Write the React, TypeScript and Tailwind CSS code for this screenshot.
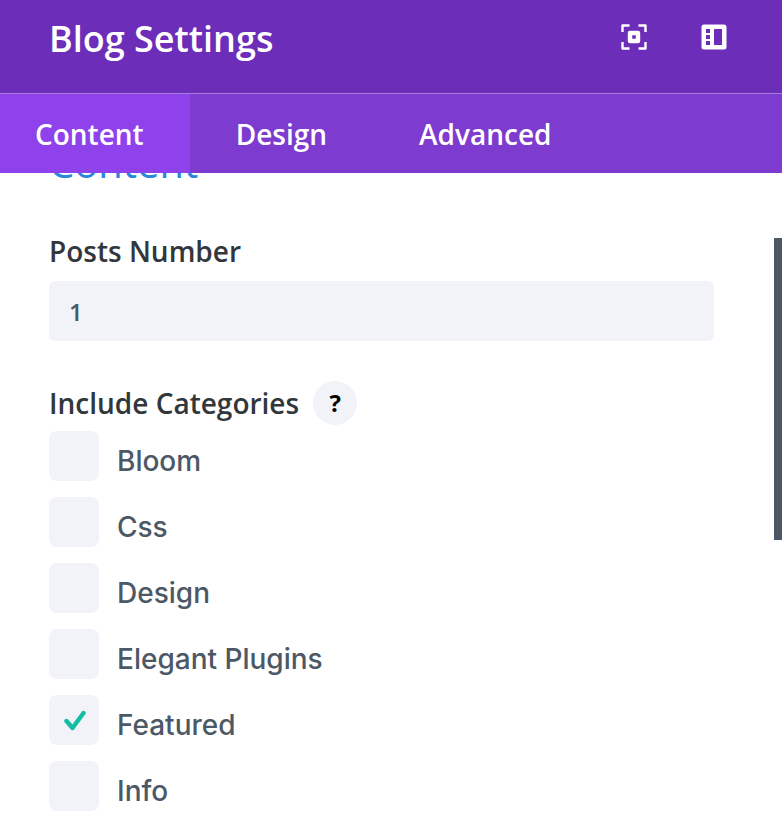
import { useState } from "react";

const tabs = ["Content", "Design", "Advanced"];
const categories = ["Bloom", "Css", "Design", "Elegant Plugins", "Featured", "Info"];

function FocusIcon() {
  return (
    <svg viewBox="0 0 26 26" className="size-[26px]" fill="none" stroke="currentColor" aria-hidden="true">
      <path
        d="M1.5 8V1.5H8.5M17.5 1.5H24.5V8M24.5 18V24.5H17.5M8.5 24.5H1.5V18"
        strokeWidth="2.4"
        strokeLinejoin="round"
      />
      <rect x="9" y="9" width="8" height="8" strokeWidth="4.4" strokeLinejoin="round" />
    </svg>
  );
}

function PanelIcon() {
  return (
    <svg viewBox="0 0 26 26" className="size-[26px]" fill="currentColor" aria-hidden="true">
      <path
        fillRule="evenodd"
        d="M3 .5H23A2.5 2.5 0 0 1 25.5 3V23A2.5 2.5 0 0 1 23 25.5H3A2.5 2.5 0 0 1 .5 23V3A2.5 2.5 0 0 1 3 .5ZM13 5V21H21V5ZM5 5V9H9V5ZM5 11V15H9V11ZM5 17V21H9V17Z"
      />
    </svg>
  );
}

function CheckIcon() {
  return (
    <svg
      viewBox="0 0 24 24"
      className="pointer-events-none col-start-1 row-start-1 hidden size-6 peer-checked:block"
      fill="none"
      stroke="#12bfa5"
      strokeWidth="4.4"
      strokeLinecap="round"
      strokeLinejoin="round"
      aria-hidden="true"
    >
      <path d="M4.500 13L10.500 20L21.500 5" />
    </svg>
  );
}

export default function App() {
  const [active, setActive] = useState("Content");
  const [posts, setPosts] = useState("1");
  const [selected, setSelected] = useState(["Featured"]);

  const toggle = (name: string) =>
    setSelected((list) => (list.includes(name) ? list.filter((n) => n !== name) : [...list, name]));

  return (
    <div className="flex h-screen flex-col overflow-hidden bg-white font-['Open_Sans',sans-serif] text-[#32373c]">
      <header className="flex shrink-0 items-start justify-between border-b border-[#a77ddb] bg-[#6c2eb9] pt-3 pr-[55px] pb-[27px] pl-[49px] text-white">
        <h1 className="text-4xl leading-[54px] font-semibold">Blog Settings</h1>
        <div className="flex gap-[54px] pt-3">
          <button type="button" aria-label="Expand modal">
            <FocusIcon />
          </button>
          <button type="button" aria-label="Dock modal">
            <PanelIcon />
          </button>
        </div>
      </header>

      <nav className="flex shrink-0 bg-[#7e3bd0] text-white" role="tablist">
        {tabs.map((tab) => (
          <button
            key={tab}
            type="button"
            role="tab"
            aria-selected={active === tab}
            onClick={() => setActive(tab)}
            className="h-[79px] px-[46px] text-[28px] font-semibold first:pl-[35px] aria-selected:bg-[#8f42ec]"
          >
            {tab}
          </button>
        ))}
      </nav>

      <main className="relative min-h-0 grow overflow-hidden pr-[68px] pl-[49px]">
        <h2 className="-mt-9 text-[40px] leading-[52px] text-[#2b87da]">Content</h2>

        <div className="mt-11">
          <label htmlFor="posts" className="block text-[28px] leading-9 font-semibold">
            Posts Number
          </label>
          <input
            id="posts"
            type="text"
            value={posts}
            onChange={(e) => setPosts(e.target.value)}
            className="mt-3 h-[60px] w-full rounded-md bg-[#f1f3f9] px-5 text-2xl font-semibold text-[#4c5866] outline-none"
          />
        </div>

        <fieldset className="mt-10">
          <legend className="flex items-center gap-[14px] text-[28px] leading-9 font-semibold">
            Include Categories
            <button
              type="button"
              aria-label="Help"
              className="size-11 rounded-full bg-[#f1f3f9] text-2xl font-bold text-black"
            >
              ?
            </button>
          </legend>
          <div className="mt-1.5 flex flex-col gap-4">
            {categories.map((name) => (
              <label key={name} className="flex items-center gap-[18px]">
                <span className="grid size-[50px] place-items-center">
                  <input
                    type="checkbox"
                    checked={selected.includes(name)}
                    onChange={() => toggle(name)}
                    className="peer col-start-1 row-start-1 size-[50px] appearance-none rounded-lg bg-[#f1f3f9]"
                  />
                  <CheckIcon />
                </span>
                <span className="pt-2.5 font-['Inter',sans-serif] text-[28px] leading-9 font-medium text-[#4c5866]">
                  {name}
                </span>
              </label>
            ))}
          </div>
        </fieldset>

        <div className="absolute top-[65px] right-0 h-[302px] w-2 bg-[#4c5866]" />
      </main>
    </div>
  );
}
